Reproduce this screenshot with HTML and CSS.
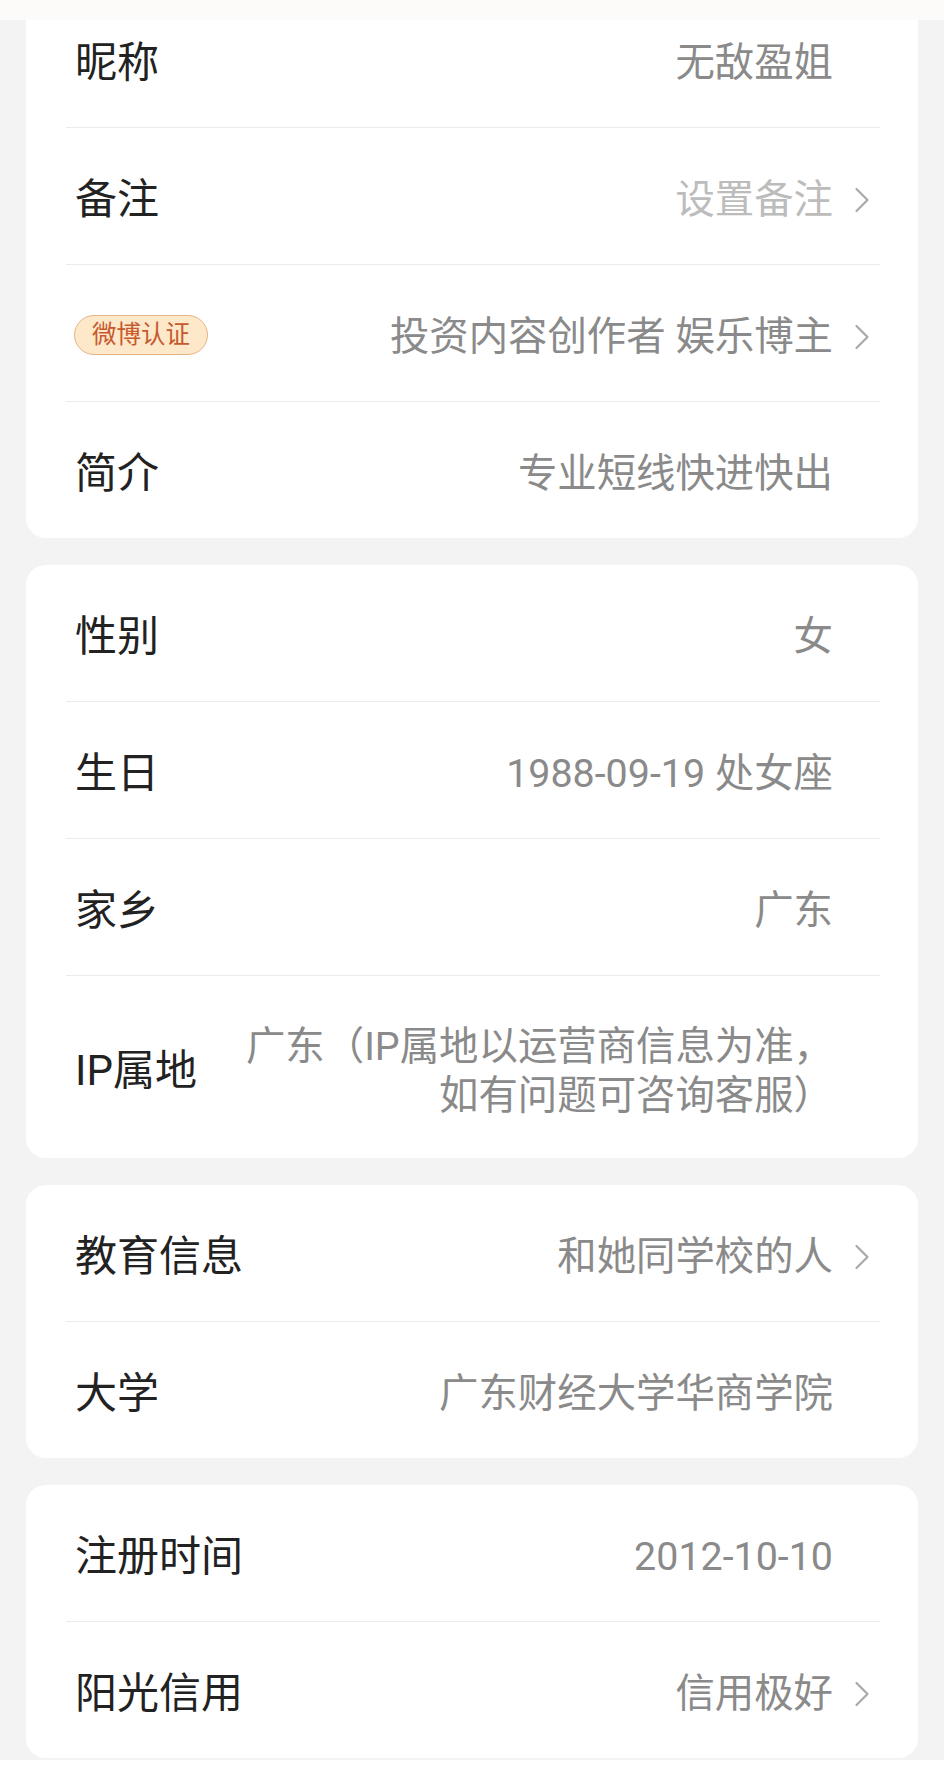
FILE: index.html
```html
<!DOCTYPE html>
<html lang="zh-CN">
<head>
<meta charset="utf-8">
<title>资料</title>
<link rel="stylesheet" href="styles.css">
</head>
<body>
<div class="top-bar"></div>
<main class="list">
  <section class="card card--first">
    <div class="row"><span class="label">昵称</span><span class="value">无敌盈姐</span><span class="arrow"></span></div>
    <div class="row"><span class="label">备注</span><span class="value value--placeholder">设置备注</span><span class="arrow"><svg viewBox="0 0 16 26" width="16" height="26"><path d="M2.5 2 L13.5 13 L2.5 24"/></svg></span></div>
    <div class="row"><span class="badge">微博认证</span><span class="value">投资内容创作者 娱乐博主</span><span class="arrow"><svg viewBox="0 0 16 26" width="16" height="26"><path d="M2.5 2 L13.5 13 L2.5 24"/></svg></span></div>
    <div class="row"><span class="label">简介</span><span class="value">专业短线快进快出</span><span class="arrow"></span></div>
  </section>
  <section class="card">
    <div class="row"><span class="label">性别</span><span class="value">女</span><span class="arrow"></span></div>
    <div class="row"><span class="label">生日</span><span class="value">1988-09-19 处女座</span><span class="arrow"></span></div>
    <div class="row"><span class="label">家乡</span><span class="value">广东</span><span class="arrow"></span></div>
    <div class="row row--tall"><span class="label">IP属地</span><span class="value value--multi">广东（IP属地以运营商信息为准，<br>如有问题可咨询客服）</span><span class="arrow"></span></div>
  </section>
  <section class="card">
    <div class="row"><span class="label">教育信息</span><span class="value">和她同学校的人</span><span class="arrow"><svg viewBox="0 0 16 26" width="16" height="26"><path d="M2.5 2 L13.5 13 L2.5 24"/></svg></span></div>
    <div class="row"><span class="label">大学</span><span class="value">广东财经大学华商学院</span><span class="arrow"></span></div>
  </section>
  <section class="card">
    <div class="row"><span class="label">注册时间</span><span class="value">2012-10-10</span><span class="arrow"></span></div>
    <div class="row"><span class="label">阳光信用</span><span class="value">信用极好</span><span class="arrow"><svg viewBox="0 0 16 26" width="16" height="26"><path d="M2.5 2 L13.5 13 L2.5 24"/></svg></span></div>
  </section>
</main>
<div class="home-bar"></div>
</body>
</html>
```

FILE: styles.css
```css
* {
  box-sizing: content-box;
}

html, body {
  margin: 0;
  padding: 0;
}

body {
  width: 944px;
  height: 1774px;
  overflow: hidden;
  display: flex;
  flex-direction: column;
  background: #f3f3f3;
  font-family: Roboto, "Noto Sans CJK SC", "Noto Sans", sans-serif;
  color: #222;
}

.top-bar {
  height: 20px;
  flex: none;
  background: #fcfbf9;
}

.list {
  flex: none;
  overflow: hidden;
  display: flex;
  flex-direction: column;
  gap: 27px;
}

.card {
  margin: 0 26px;
  background: #fff;
  border-radius: 20px;
}

.card--first {
  margin-top: -29px;
}

.row {
  display: flex;
  align-items: center;
  height: 128px;
  margin: 0 38px 0 40px;
  padding: 8px 10px 0 9px;
  border-bottom: 1px solid #ebebeb;
}

.row:last-child {
  border-bottom: none;
}

.row--tall {
  height: auto;
  padding-top: 46px;
  padding-bottom: 38px;
}

.label {
  flex: none;
  font-size: 42px;
  line-height: 50px;
  color: #222;
}

.value {
  margin-left: auto;
  text-align: right;
  font-size: 39.4px;
  line-height: 50px;
  color: #8a8a8a;
  white-space: nowrap;
}

.value--placeholder {
  color: #bcbcbc;
}

.value--multi {
  line-height: 49px;
}

.arrow {
  flex: none;
  width: 37px;
  height: 26px;
  display: flex;
  justify-content: flex-end;
}

.arrow svg path {
  fill: none;
  stroke: #a9a9a9;
  stroke-width: 2.2;
  stroke-linecap: round;
  stroke-linejoin: round;
}

.badge {
  flex: none;
  height: 38px;
  padding: 0 17px;
  margin-left: -1px;
  margin-top: -4px;
  display: flex;
  align-items: center;
  border: 1.5px solid #e6b384;
  border-radius: 21px;
  background: #fde8ca;
  color: #c65a2e;
  font-size: 24.5px;
  line-height: 38px;
}

.home-bar {
  flex: 1;
  margin-top: 2px;
  background: #fff;
}
```
